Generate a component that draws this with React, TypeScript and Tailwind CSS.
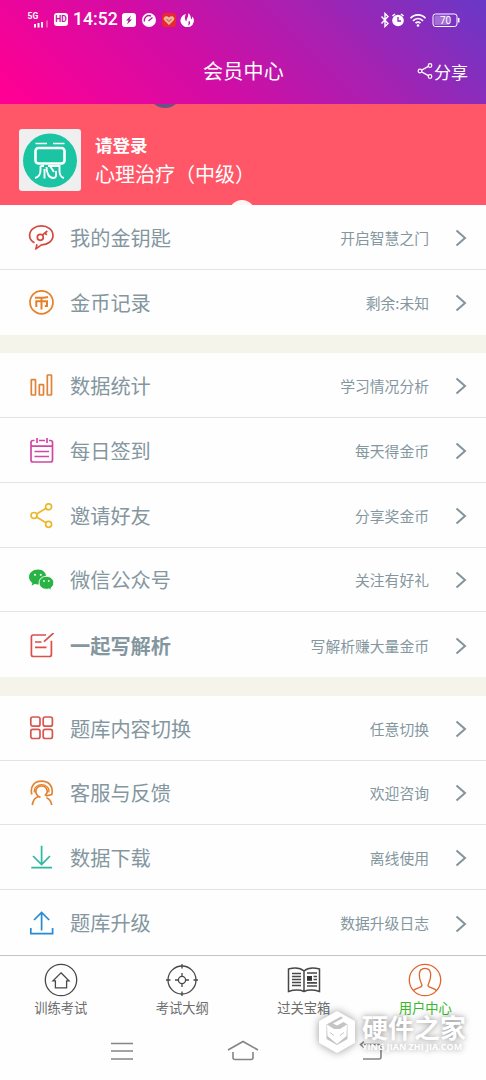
import type { ReactNode } from "react";
import clsx from "clsx";

type MenuItem = {
  title: string;
  note: string;
  icon: ReactNode;
  bold?: boolean;
};

function Icon({ color, children }: { color: string; children: ReactNode }) {
  return (
    <svg
      width="26"
      height="26"
      viewBox="0 0 26 26"
      fill="none"
      stroke={color}
      strokeWidth="1.7"
      className="shrink-0"
    >
      {children}
    </svg>
  );
}

const menuGroups: MenuItem[][] = [
  [
    {
      title: "我的金钥匙",
      note: "开启智慧之门",
      icon: (
        <Icon color="#d8473f">
          <path d="M6.500 17.800C3 16 1.600 13.500 1.600 10.500C1.600 4.800 6.800 .9 13.300 .9S25 4.800 25 10.500S19.500 19.600 13.800 19.800C11.800 20.500 10.500 22.500 8 23.600L9 19.300" />
          <circle cx="12.300" cy="12.300" r="3" />
          <path d="M14.300 10.200L19.300 6M16.800 7.800L18.800 9.800" />
        </Icon>
      ),
    },
    {
      title: "金币记录",
      note: "剩余:未知",
      icon: (
        <Icon color="#e58128">
          <circle cx="13.500" cy="12.300" r="11.500" />
          <path d="M7 7.800C11.500 7.800 16.500 7.600 20 6.900M8.300 17V11.200H19V16H16.800M13.500 8V19.500" strokeWidth="2" />
        </Icon>
      ),
    },
  ],
  [
    {
      title: "数据统计",
      note: "学习情况分析",
      icon: (
        <Icon color="#e08337">
          <rect x="3.300" y="6.600" width="4.200" height="15.400" rx="0.500" />
          <rect x="11.300" y="11.600" width="4.200" height="10.400" rx="0.500" />
          <rect x="19.300" y="2" width="4.200" height="20" rx="0.500" />
        </Icon>
      ),
    },
    {
      title: "每日签到",
      note: "每天得金币",
      icon: (
        <Icon color="#cf48a4">
          <path d="M6.500 2.500H5C3.800 2.500 3 3.300 3 4.500V22C3 23.200 3.800 24 5 24H22.500C23.700 24 24.500 23.200 24.500 22V4.500C24.500 3.300 23.700 2.500 22.500 2.500H21M11 2.500H17M3 8.200H24.500M9 0V5M19 0V5M6.500 13.500H21M6.500 18.500H21" />
        </Icon>
      ),
    },
    {
      title: "邀请好友",
      note: "分享奖金币",
      icon: (
        <Icon color="#ebb82c">
          <circle cx="6" cy="12.500" r="3" />
          <circle cx="20.600" cy="3.800" r="3" />
          <circle cx="20.600" cy="21.300" r="3" />
          <path d="M8.600 11L18 5.300M8.600 14L18 19.800" />
        </Icon>
      ),
    },
    {
      title: "微信公众号",
      note: "关注有好礼",
      icon: (
        <Icon color="none">
          <path
            d="M10 2.500C5 2.500 1 5.800 1 10.100C1 12.500 2.300 14.700 4.400 16L3.500 18.800L6.700 17.100C7.700 17.400 8.800 17.500 10 17.500C15 17.500 18.200 14.300 18.200 10.100C18.200 5.800 15 2.500 10 2.500Z"
            fill="#28b344"
          />
          <path
            d="M18.300 9.300C14.100 9.300 11.100 12.200 11.100 15.800S14.100 22.300 18.300 22.300C19.300 22.300 20.200 22.200 21.100 21.900L23.700 23.400L23 20.900C24.700 19.700 25.800 17.900 25.800 15.800C25.800 12.200 22.500 9.300 18.300 9.300Z"
            fill="#28b344"
            stroke="#fff"
            strokeWidth="1"
          />
          <g fill="#e9ffe9">
            <circle cx="7" cy="7.800" r="1.100" />
            <circle cx="12.800" cy="7.800" r="1.100" />
            <circle cx="16" cy="14" r="0.900" />
            <circle cx="20.700" cy="14" r="0.900" />
          </g>
        </Icon>
      ),
    },
    {
      title: "一起写解析",
      note: "写解析赚大量金币",
      bold: true,
      icon: (
        <Icon color="#d94f4c">
          <path d="M18 2H5.200C4 2 3.400 2.800 3.400 3.900V21.500C3.400 22.700 4.100 23.500 5.200 23.500H21.500C22.700 23.500 23.400 22.700 23.400 21.500V7.700M25.500 0L16 8.700M7 9H13.500M7 14.300H18.500" />
        </Icon>
      ),
    },
  ],
  [
    {
      title: "题库内容切换",
      note: "任意切换",
      icon: (
        <Icon color="#d85550">
          <rect x="2.800" y="1" width="9.200" height="9.200" rx="2" />
          <rect x="15.200" y="1" width="9.200" height="9.200" rx="2" />
          <rect x="2.800" y="13.300" width="9.200" height="9.200" rx="2" />
          <rect x="15.200" y="13.300" width="9.200" height="9.200" rx="2" />
        </Icon>
      ),
    },
    {
      title: "客服与反馈",
      note: "欢迎咨询",
      icon: (
        <Icon color="#e5822f">
          <path d="M3.800 14.500C1.800 6 6.500 1.200 13.500 1.200S25.800 6 23.800 14.500L18 16" />
          <path d="M6.300 12.500C5 2 22.200 2 21 12.500" strokeWidth="1.200" />
          <path d="M10.300 16.200C5.500 12 8.300 6 13.500 6S21.500 12 16.800 15.600M4.300 25C5 20.500 7 17.500 10.500 16.500L12.500 17.600M18.500 17.800C21.500 19 23.200 21.500 23.700 25" />
        </Icon>
      ),
    },
    {
      title: "数据下载",
      note: "离线使用",
      icon: (
        <Icon color="#2cb8a5">
          <path d="M13.600 .8V19.500M5 11L13.600 19.500L22 11M3.300 22.700H24" />
        </Icon>
      ),
    },
    {
      title: "题库升级",
      note: "数据升级日志",
      icon: (
        <Icon color="#238bd7">
          <path d="M13.600 19.500V1.500M6 9L13.600 1.500L21.200 9M2.800 17V22.700H24.600V17" />
        </Icon>
      ),
    },
  ],
];

const tabs = [
  {
    title: "训练考试",
    icon: (
      <>
        <circle cx="17" cy="17" r="15.700" />
        <path d="M17 9.800L25 17.800H22.600V24.800H11.400V17.800H9Z" />
      </>
    ),
  },
  {
    title: "考试大纲",
    icon: (
      <>
        <circle cx="17" cy="17" r="14" />
        <circle cx="17" cy="17" r="3.600" />
        <path d="M17 1V5.500M17 28.500V33M1 17H5.500M28.500 17H33M17 10V13.400M17 20.600V24M10 17H13.400M20.600 17H24" />
      </>
    ),
  },
  {
    title: "过关宝箱",
    icon: (
      <>
        <path
          d="M17 8C13 4.500 7 4.500 1.500 6V28.500C7 26.800 13 26.800 17 28.500C21 26.800 27 26.800 32.500 28.500V6C27 4.500 21 4.500 17 8V28.500"
          strokeWidth="1.500"
        />
        <path
          d="M5 10.500H14M5 13.500H14M5 16.500H14M5 19.500H14M5 22.500H14M20 10H30M26.500 13.500H30M26.500 16.500H30M20 19.800H30M20 23H30"
          strokeWidth="1.700"
        />
        <rect x="20" y="13" width="5" height="4.800" fill="#333" stroke="none" />
      </>
    ),
  },
  {
    title: "用户中心",
    active: true,
    icon: (
      <>
        <circle cx="17" cy="17" r="15.700" />
        <path d="M5.500 27.500C8 24.500 14 25 14 22.500C14 20.500 11.300 18 11.300 12C11.300 7.500 13.500 5.300 17 5.300S22.700 7.500 22.700 12C22.700 18 20 20.500 20 22.500C20 25 26 24.500 28.500 27.500" />
      </>
    ),
  },
];

function StatusBar() {
  return (
    <div className="flex h-[38px] items-center pl-[27px] pr-[26px] pt-px text-white">
      <svg width="22" height="16" viewBox="0 0 22 16" fill="#fff" className="shrink-0">
        <text x="0.500" y="7" fontSize="8.500" fontWeight="700" fontFamily="Roboto, sans-serif">
          5G
        </text>
        <path d="M7 12H9V15.500H7ZM10.500 11H12.500V15.500H10.500ZM14 10H16V15.500H14Z" />
        <path d="M19 8.500H21V15.500H19Z" opacity="0.300" />
      </svg>
      <div className="ml-[5px] flex h-[13px] w-[14px] items-center justify-center rounded-[3px] bg-white font-[Roboto,sans-serif] text-[8.5px] font-bold text-[#c8109f]">
        HD
      </div>
      <span className="ml-[5px] w-[45px] font-[Roboto,sans-serif] text-[17.6px] font-medium leading-none">
        14:52
      </span>
      <svg width="76" height="14" viewBox="0 0 76 14" className="ml-[4px] shrink-0">
        <rect x="0" y="0" width="14" height="14" rx="3" fill="#fff" />
        <path d="M9 2.500L4 7.500H6.500L5 11.500L10 6.500H7.500Z" fill="#a81a98" />
        <circle cx="27" cy="7" r="7" fill="#fff" />
        <path d="M22.500 8.500A4.700 4.700 0 0 1 29 3M26.500 8L30.500 4.500" stroke="#b81ca5" strokeWidth="1.400" fill="none" />
        <rect x="40" y="0" width="14" height="14" rx="3" fill="#e62831" />
        <path d="M47 12L42 7C40.500 4 44.500 1.500 47 4.500C49.500 1.500 53.500 4 52 7Z" fill="#eeb79c" />
        <path d="M44.500 6L47 8.500L49.500 6" stroke="#bd4a46" fill="none" />
        <path d="M64 1A6.700 6.700 0 1 0 70.500 3.500C70 5 70 6 69 6.500C69 3.500 68 1 66 .3C67 4 64 6 64.500 8.500C62.500 7 62.500 3.500 64 1Z" fill="#fff" />
        <path d="M67 7.500C69 10 68 12 66 12.500C67 11 66 9.500 67 7.500Z" fill="#b81ca5" />
      </svg>
      <svg width="80" height="16" viewBox="0 0 80 16" fill="none" stroke="#fff" className="ml-auto shrink-0">
        <path d="M1.500 4.500L8 11.500L5 14.500V1.500L8 4.500L1.500 11.500" strokeWidth="1.400" />
        <circle cx="18" cy="8.500" r="5.800" fill="#fff" stroke="none" />
        <path d="M12.500 4L15 2M23.500 4L21 2" strokeWidth="1.600" />
        <path d="M18 5V9H21" stroke="#8e2ab4" strokeWidth="1.300" />
        <path d="M30.500 6.200C34.500 1.700 41.500 1.700 45.500 6.200M33 8.800C36 5.700 40 5.700 43 8.800M35.500 11.200C37 9.800 39 9.800 40.500 11.200" strokeWidth="1.700" />
        <circle cx="38" cy="13.500" r="1.300" fill="#fff" stroke="none" />
        <rect x="53" y="2" width="24" height="12.500" rx="2.500" />
        <rect x="54.500" y="3.500" width="15" height="9.500" rx="1" fill="#fff" opacity="0.300" stroke="none" />
        <path d="M78.700 6V10.500" strokeWidth="1.500" />
        <text x="60" y="12" fill="#fff" stroke="none" fontSize="10" fontFamily="Roboto, sans-serif">
          70
        </text>
      </svg>
    </div>
  );
}

function Header() {
  return (
    <header className="h-[104px] bg-[linear-gradient(45deg,#ff0094_3%,#d10da5_40%,#a821b1_67%,#6938c7_100%)] text-white">
      <StatusBar />
      <div className="grid h-[66px] grid-cols-3 items-center pl-[19px] pr-[18px]">
        <h1 className="col-start-2 text-center text-[20px] tracking-[0.2px]">会员中心</h1>
        <div className="flex items-center justify-end">
          <svg width="17" height="17" viewBox="0 0 17 17" fill="none" stroke="#fff" strokeWidth="1.200">
            <circle cx="3" cy="8" r="1.800" />
            <circle cx="13" cy="2.500" r="1.800" />
            <circle cx="13" cy="13.500" r="1.800" />
            <path d="M4.600 7.100L11.400 3.400M4.600 8.900L11.400 12.600" />
          </svg>
          <span className="text-[17px] leading-none">分享</span>
        </div>
      </div>
    </header>
  );
}

function Profile() {
  return (
    <section className="relative flex h-[101px] overflow-hidden bg-[#ff5668] pl-[19px] pt-[25px] text-white">
      <div className="absolute -top-[30px] left-[148px] size-[34px] rounded-full bg-[#6a5288]" />
      <div className="absolute left-[229px] top-[96px] size-[26px] rounded-full bg-[#fff5f3]" />
      <div className="flex size-[62px] items-center justify-center rounded-[3px] bg-[#efefef]">
        <svg width="56" height="56" viewBox="0 0 56 56" fill="none" stroke="#fff" strokeWidth="1.900">
          <circle cx="28" cy="28.500" r="27" fill="#1bc5a4" stroke="none" />
          <path d="M13.500 11.500H25M31 11.500H42.500" strokeWidth="1.500" />
          <rect x="13.500" y="16" width="29" height="15.500" rx="3" strokeWidth="2.600" />
          <path d="M18.500 34V38C18.500 42 17 45 13 46M22.500 37V46.500M26 34H37.500V39C37.500 42.500 39.500 45.500 42 46M18.500 34H22M24.500 35C24.500 41 27 46 31 46S34 43 34 39M28 34L32 40" />
        </svg>
      </div>
      <div className="ml-[14px] pt-[6px]">
        <div className="text-[17.500px] font-bold leading-[20px]">请登录</div>
        <div className="mt-[5px] text-[20px] leading-[28px]">心理治疗（中级）</div>
      </div>
    </section>
  );
}

function MenuRow({ item, last }: { item: MenuItem; last: boolean }) {
  return (
    <li
      className={clsx(
        "flex h-[64.8px] items-center pl-[28px] pr-[19px] pt-0.5 text-[#84969e]",
        !last && "border-b border-[#e4e4e6]",
      )}
    >
      {item.icon}
      <span className={clsx("ml-[16px] text-[20.2px]", item.bold && "font-bold")}>
        {item.title}
      </span>
      <span className="ml-auto text-[14.8px]">{item.note}</span>
      <svg
        width="12"
        height="18"
        viewBox="0 0 12 18"
        fill="none"
        stroke="#82939b"
        strokeWidth="2"
        className="ml-[26px]"
      >
        <path d="M1.500 1.500L10 9L1.500 16.500" />
      </svg>
    </li>
  );
}

function TabBar() {
  return (
    <nav className="grid h-[65px] grid-cols-4 border-t border-[#c5c5c7] pt-[7px]">
      {tabs.map((tab) => (
        <div
          key={tab.title}
          className={clsx(
            "flex flex-col items-center text-[13.3px]",
            tab.active ? "text-[#3bb82c]" : "text-[#6d6d6d]",
          )}
        >
          <svg
            width="34"
            height="34"
            viewBox="0 0 34 34"
            fill="none"
            stroke={tab.active ? "#e0652e" : "#484848"}
            strokeWidth="1.3"
          >
            {tab.icon}
          </svg>
          <span className="mt-[2px] leading-[18px]">{tab.title}</span>
        </div>
      ))}
    </nav>
  );
}

function SystemNav() {
  return (
    <div className="flex h-[60px] items-center justify-between pb-px pl-[110px] pr-[99px] pt-[5px]">
      <svg width="24" height="24" viewBox="0 0 24 24" fill="none" stroke="#858585" strokeWidth="1.6">
        <path d="M1 3.500H23M1 11H23M1 19H23" />
      </svg>
      <svg width="34" height="24" viewBox="0 0 34 24" fill="none" stroke="#858585" strokeWidth="1.6">
        <path d="M2 10L17 1.500L32 10M7 12V17.500Q7 19.500 9 19.500H25Q27 19.500 27 17.500V12" />
      </svg>
      <svg width="35" height="24" viewBox="0 0 35 24" fill="none" stroke="#858585" strokeWidth="1.6">
        <path d="M12 1.500L8.500 4.500L12 7.500M9 4.500H27Q29 4.500 29 6.500V17Q29 19 27 19H11" />
      </svg>
    </div>
  );
}

function Watermark() {
  return (
    <div className="absolute bottom-[25px] left-[316px] flex items-center text-white">
      <svg
        width="42"
        height="46"
        viewBox="0 0 42 46"
        className="drop-shadow-[0_0_4px_rgba(0,0,0,0.4)]"
      >
        <path
          d="M20 2.500Q21 2 22 2.500L38 11.500Q39 12 39 13V33Q39 34 38 34.500L22 43.500Q21 44 20 43.500L4 34.500Q3 34 3 33V13Q3 12 4 11.500Z"
          fill="#fff"
        />
        <path d="M25 7.500L10.500 15.500V30L21 36L31.500 30V15.500L27.500 13L21 16.500L17 14.500L27 9Z" fill="#c4c4c4" />
        <path d="M11 15.500L18 20H24L31 15.500L30.500 27L21 35L11.500 27Z" fill="#fff" />
        <path d="M14 23.500L18 26.500M28 23.500L24 26.500" stroke="#c4c4c4" />
      </svg>
      <div className="ml-[4px] whitespace-nowrap font-bold [text-shadow:0_0_5px_rgba(0,0,0,0.3),0_0_10px_rgba(0,0,0,0.2)]">
        <div className="text-[26px] leading-[29px]">硬件之家</div>
        <div className="font-['Open_Sans',sans-serif] text-[9px] leading-[12px]">
          YING JIAN ZHI JIA.COM
        </div>
      </div>
    </div>
  );
}

export default function App() {
  return (
    <div className="relative flex h-[1080px] w-[486px] flex-col overflow-hidden bg-[#fefefe] font-['Noto_Sans_CJK_SC',sans-serif]">
      <Header />
      <Profile />
      <main className="flex h-[750px] flex-col justify-between bg-[#f4f4eb]">
        {menuGroups.map((group, index) => (
          <ul key={index} className="bg-[#fefefe]">
            {group.map((item, i) => (
              <MenuRow key={item.title} item={item} last={i === group.length - 1} />
            ))}
          </ul>
        ))}
      </main>
      <TabBar />
      <SystemNav />
      <Watermark />
    </div>
  );
}
